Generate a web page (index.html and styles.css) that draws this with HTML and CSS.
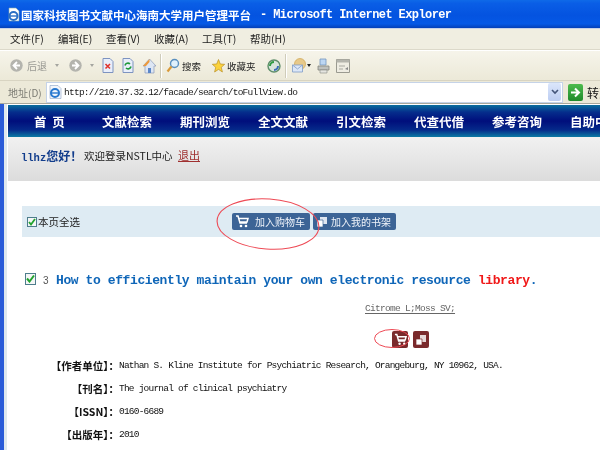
FILE: index.html
```html
<!DOCTYPE html>
<html lang="zh">
<head>
<meta charset="utf-8">
<title>国家科技图书文献中心海南大学用户管理平台</title>
<link rel="stylesheet" href="styles.css">
</head>
<body>
<div class="window">
  <header class="titlebar">
    <svg class="title-icon" width="13" height="15" viewBox="0 0 13 15"><path d="M2 1h7l3 3v10H2z" fill="#fff" stroke="#8aa" stroke-width=".6"/><circle cx="6.5" cy="9" r="4" fill="none" stroke="#2a6fc4" stroke-width="2"/><path d="M3 9h7" stroke="#2a6fc4" stroke-width="1.4"/></svg>
    <span class="title-cn">国家科技图书文献中心海南大学用户管理平台</span>
    <span class="title-en">- Microsoft Internet Explorer</span>
  </header>

  <nav class="menubar">
    <span>文件(F)</span><span>编辑(E)</span><span>查看(V)</span><span>收藏(A)</span><span>工具(T)</span><span>帮助(H)</span>
  </nav>

  <div class="toolbar">
    <svg class="t-back" width="13" height="13" viewBox="0 0 13 13"><circle cx="6.5" cy="6.5" r="6.2" fill="#b4b4ae"/><path d="M7 3 3.500 6.500 7 10M4 6.500h6" fill="none" stroke="#fff" stroke-width="1.800"/></svg>
    <span class="t-backtext">后退</span>
    <i class="caret grey t-caret1"></i>
    <svg class="t-fwd" width="13" height="13" viewBox="0 0 13 13"><circle cx="6.5" cy="6.5" r="6.2" fill="#b4b4ae"/><path d="M6 3l3.500 3.500L6 10M3 6.500h6" fill="none" stroke="#fff" stroke-width="1.800"/></svg>
    <i class="caret grey t-caret2"></i>
    <svg class="t-stop" width="12" height="15" viewBox="0 0 12 15"><path d="M1 .5h7l3 3v11H1z" fill="#e8eefa" stroke="#7d93c0"/><path d="M3.500 6l4.500 4.500M8 6l-4.500 4.500" stroke="#e0342c" stroke-width="1.600"/></svg>
    <svg class="t-refresh" width="12" height="15" viewBox="0 0 12 15"><path d="M1 .5h7l3 3v11H1z" fill="#e8eefa" stroke="#7d93c0"/><path d="M3 7.500a3 3 0 0 1 5-1.500M9 8.500a3 3 0 0 1-5 1.500" fill="none" stroke="#1e9a3c" stroke-width="1.600"/></svg>
    <svg class="t-home" width="15" height="16" viewBox="0 0 15 16"><path d="M7.500 1 1 8h2v7h9V8h2z" fill="#dde6f4" stroke="#8a9ab8" stroke-width=".7"/><path d="M7.500 1 1 8h3l3.500-4z" fill="#ee9a3a"/><path d="M6 10h3v5H6z" fill="#5a86c8"/></svg>
    <i class="sep t-sep1"></i>
    <svg class="t-search" width="14" height="15" viewBox="0 0 14 15"><circle cx="8.500" cy="5.500" r="4" fill="#dff0fb" stroke="#5a8fbe" stroke-width="1.400"/><path d="M5.500 8.500 1.500 13.500" stroke="#d99a3a" stroke-width="2.200"/></svg>
    <span class="t-label t-searchtext">搜索</span>
    <svg class="t-star" width="13" height="14" viewBox="0 0 13 14"><path d="M6.500.5 8.300 5l4.400.3-3.400 3 1.100 4.700-3.900-2.600L2.600 13l1.100-4.700-3.400-3L4.700 5z" fill="#fbd23c" stroke="#b98f2a" stroke-width=".7"/></svg>
    <span class="t-label t-favtext">收藏夹</span>
    <svg class="t-media" width="14" height="14" viewBox="0 0 14 14"><circle cx="7" cy="7" r="6" fill="#d7e4dc" stroke="#5f8e6a" stroke-width="1.400"/><path d="M3 7a4 4 0 0 1 4-4" fill="none" stroke="#2f9b43" stroke-width="2"/><path d="M7 11a4 4 0 0 0 4-4" fill="none" stroke="#3a6fb8" stroke-width="2"/></svg>
    <i class="sep t-sep2"></i>
    <svg class="t-mail" width="14" height="15" viewBox="0 0 14 15"><circle cx="8" cy="6" r="5.500" fill="#e7c98a" stroke="#d0a650" stroke-width=".7"/><path d="M.5 7h10v7H.5z" fill="#dce7f7" stroke="#7f9cc8" stroke-width=".8"/><path d="m.5 7 5 4 5-4" fill="none" stroke="#7f9cc8" stroke-width=".8"/></svg>
    <i class="caret t-caret3"></i>
    <svg class="t-print" width="13" height="16" viewBox="0 0 13 16"><path d="M3 1h6v6H3z" fill="#bcd6f2" stroke="#7597bf" stroke-width=".8"/><path d="M1 8h11v4H1z" fill="#bfc1bd" stroke="#85877f" stroke-width=".8"/><path d="M3 12h7v3H3z" fill="#e5e5e0" stroke="#85877f" stroke-width=".6"/></svg>
    <svg class="t-edit" width="14" height="14" viewBox="0 0 14 14"><path d="M.5.500h13v13H.5z" fill="#eeece2" stroke="#9a9a90"/><path d="M.5.500h13v3H.5z" fill="#b4b4ac"/><path d="M3 7h6M3 10h4" stroke="#a8a8a0"/><path d="m9 10 3-2v3z" fill="#888"/></svg>
  </div>

  <div class="addressbar">
    <span class="addr-label">地址(D)</span>
    <div class="addr-input">
      <svg width="13" height="14" viewBox="0 0 13 14"><path d="M1 .5h8l3 3V13.500H1z" fill="#f2f6fc" stroke="#8aa2c6" stroke-width=".6"/><circle cx="6" cy="8" r="4" fill="none" stroke="#2778cf" stroke-width="2"/><path d="M3 8h6" stroke="#2778cf" stroke-width="1.400"/></svg>
      <span class="addr-url">http://210.37.32.12/facade/search/toFullView.do</span>
      <span class="addr-drop"><svg width="8" height="6" viewBox="0 0 8 6"><path d="m1 1 3 3 3-3" fill="none" stroke="#44557a" stroke-width="1.600"/></svg></span>
    </div>
    <span class="go-btn"><svg width="11" height="11" viewBox="0 0 11 11"><path d="M1 5.500h7M5 1.500l4 4-4 4" fill="none" stroke="#fff" stroke-width="2"/></svg></span>
    <span class="go-text">转到</span>
  </div>

  <main class="page">
    <nav class="sitenav">
      <span class="nav-home">首&nbsp;&nbsp;页</span><span>文献检索</span><span>期刊浏览</span><span>全文文献</span><span>引文检索</span><span>代查代借</span><span>参考咨询</span><span>自助中心</span>
    </nav>
    <div class="greeting">
      <b class="g-user"><span class="g-latin">llhz</span>您好！</b><span class="g-text">欢迎登录NSTL中心</span><a class="g-exit">退出</a>
    </div>

    <div class="selectbar">
      <span class="check small"><svg width="8" height="8" viewBox="0 0 8 8"><path d="m1 4 2 2.500L7 1" fill="none" stroke="#21a32e" stroke-width="1.800"/></svg></span>
      <span class="select-label">本页全选</span>
      <span class="actions">
        <span class="btn btn-cart">
          <svg width="14" height="13" viewBox="0 0 14 13"><path d="M1 1h2l2 7h7M4 3.500h9L12 7H5" fill="none" stroke="#fff" stroke-width="1.500"/><circle cx="6" cy="11" r="1.300" fill="#fff"/><circle cx="11" cy="11" r="1.300" fill="#fff"/></svg>
          <span>加入购物车</span>
        </span>
        <span class="btn btn-shelf">
          <svg width="12" height="12" viewBox="0 0 12 12"><path d="M4 1h7v7H4z" fill="#dfe6f0"/><path d="M1 4h6v7H1z" fill="#fff" stroke="#3c6496" stroke-width=".7"/></svg>
          <span>加入我的书架</span>
        </span>
      </span>
    </div>

    <div class="record-title">
      <span class="check"><svg width="9" height="9" viewBox="0 0 9 9"><path d="m1 4.500 2.500 3L8 1.500" fill="none" stroke="#21a32e" stroke-width="2"/></svg></span>
      <span class="record-no">3</span>
      <span class="record-link">How to efficiently maintain your own electronic resource <em>library</em>.</span>
    </div>

    <div class="authors"><a>Citrome L;Moss SV;</a></div>

    <div class="record-icons">
      <span class="mini mini-cart"><svg width="13" height="13" viewBox="0 0 14 13"><path d="M1 1h2l2 7h7M4 3.500h9L12 7H5" fill="none" stroke="#fff" stroke-width="1.600"/><circle cx="6" cy="11" r="1.300" fill="#fff"/><circle cx="11" cy="11" r="1.300" fill="#fff"/></svg></span>
      <span class="mini mini-shelf"><svg width="12" height="12" viewBox="0 0 12 12"><path d="M5 1h6v7H5z" fill="#e6d8d8"/><path d="M1 5h6v6H1z" fill="#fff" stroke="#7a2a2c" stroke-width=".7"/></svg></span>
    </div>

    <dl class="details">
      <dt>【作者单位】：</dt><dd>Nathan S. Kline Institute for Psychiatric Research, Orangeburg, NY 10962, USA.</dd>
      <dt>【刊名】：</dt><dd>The journal of clinical psychiatry</dd>
      <dt>【ISSN】：</dt><dd>0160-6689</dd>
      <dt>【出版年】：</dt><dd>2010</dd>
    </dl>

    <svg class="oval oval-big" width="106" height="54" viewBox="0 0 106 54"><ellipse cx="53" cy="27" rx="51" ry="25" fill="none" stroke="#ee4a55" stroke-width="1.100" transform="rotate(4 53 27)"/></svg>
    <svg class="oval oval-small" width="38" height="21" viewBox="0 0 38 21"><ellipse cx="19" cy="10.500" rx="17.500" ry="9" fill="none" stroke="#ee4a55" stroke-width="1"/></svg>
  </main>
</div>
</body>
</html>
```
FILE: styles.css
```css
* { box-sizing: border-box; }
html, body { margin: 0; padding: 0; }
body {
  width: 600px;
  height: 450px;
  overflow: hidden;
  background: #fff;
  font-family: "Noto Sans CJK SC", "Liberation Sans", sans-serif;
}
.window {
  width: 600px;
  height: 450px;
  display: flex;
  flex-direction: column;
  overflow: hidden;
  filter: blur(0.35px);
}

/* title bar */
.titlebar {
  flex: 0 0 28px;
  display: flex;
  align-items: center;
  padding: 1px 0 0 7px;
  color: #fff;
  background: linear-gradient(#0f6ae8 0, #0a5ee6 12%, #0453e0 55%, #0559e6 85%, #0340b8 100%);
}
.title-cn {
  margin-left: 1px;
  font-size: 11.500px;
  font-weight: 700;
  line-height: 14px;
  white-space: nowrap;
}
.title-en {
  margin-left: 9px;
  font-family: "Liberation Mono", monospace;
  font-size: 12px;
  letter-spacing: -.6px;
  font-weight: 700;
  white-space: pre;
}

/* menu bar */
.menubar {
  flex: 0 0 22px;
  display: flex;
  align-items: center;
  padding: 0 0 2px 10px;
  gap: 14px;
  background: #f0eee1;
  border-top: 1px solid #c9d2e6;
  border-bottom: 1px solid #dcd9ca;
  color: #1c1c1c;
  font-size: 10.500px;
}
.menubar span { width: 34px; white-space: nowrap; }

/* toolbar */
.toolbar {
  flex: 0 0 31px;
  display: flex;
  align-items: center;
  padding-left: 10px;
  background: linear-gradient(#f6f4ea, #ece9d8);
  border-top: 1px solid #fff;
  border-bottom: 1px solid #d8d4c2;
  font-size: 10px;
  color: #222;
}
.toolbar svg { flex: none; }
.t-label { white-space: nowrap; font-size: 9.500px; width: 20px; }
.t-backtext { margin-left: 4px; width: 20px; color: #9a9a94; font-size: 10px; }
.caret { width: 0; height: 0; border: 2.500px solid transparent; border-top: 3px solid #222; border-bottom: 0; flex: none; }
.caret.grey { border-top-color: #a5a5a0; }
.t-caret1 { margin-left: 8px; }
.t-fwd { margin-left: 10px; }
.t-caret2 { margin-left: 8px; }
.t-stop { margin-left: 8px; }
.t-refresh { margin-left: 8px; }
.t-home { margin-left: 8px; }
.sep { flex: none; width: 1px; height: 24px; background: #cfccba; box-shadow: 1px 0 0 #fff; }
.t-sep1 { margin-left: 3px; }
.t-search { margin-left: 5px; }
.t-searchtext { margin-left: 2px; }
.t-star { margin-left: 10px; }
.t-favtext { margin-left: 2px; width: 30px; }
.t-media { margin-left: 10px; }
.t-sep2 { margin-left: 4px; }
.t-mail { margin-left: 6px; }
.t-caret3 { margin-left: 1px; }
.t-print { margin-left: 6px; }
.t-edit { margin-left: 6px; }

/* address bar */
.addressbar {
  flex: 0 0 23px;
  display: flex;
  align-items: center;
  padding-left: 8px;
  background: #ece9d8;
  border-bottom: 1px solid #a9a89c;
}
.addr-label { flex: none; width: 38px; font-size: 10px; color: #7a7a72; white-space: nowrap; }
.addr-input {
  flex: none;
  width: 517px;
  height: 21px;
  display: flex;
  align-items: center;
  padding: 0 1px 0 2px;
  background: #fff;
  border: 1px solid #c5d3e8;
}
.addr-url {
  margin-left: 2px;
  font-family: "Liberation Mono", monospace;
  font-size: 9.500px;
  letter-spacing: -.74px;
  color: #1a1a1a;
  flex: 1;
  white-space: nowrap;
}
.addr-drop {
  width: 13px;
  height: 18px;
  display: flex;
  align-items: center;
  justify-content: center;
  border-radius: 2px;
  background: linear-gradient(#dbe6fb, #bccdf2);
}
.go-btn {
  flex: none;
  margin-left: 5px;
  width: 15px;
  height: 17px;
  display: flex;
  align-items: center;
  justify-content: center;
  border-radius: 2px;
  background: linear-gradient(#4dbb4d, #1f8a2a);
}
.go-text { flex: none; margin-left: 4px; font-size: 12px; color: #111; white-space: nowrap; }

/* page */
.page {
  flex: 1;
  position: relative;
  overflow: hidden;
  background: #fff;
  border-left: 4px solid #2a5bd8;
  box-shadow: inset 3px 0 0 #dfe8ee;
  padding-top: 1px;
  color: #111;
}
.sitenav {
  margin-left: 4px;
  height: 32px;
  display: flex;
  align-items: center;
  padding-left: 26px;
  gap: 28px;
  color: #fff;
  font-size: 12.500px;
  font-weight: 700;
  white-space: nowrap;
  background: linear-gradient(#0a6f9e 0, #052e8c 22%, #000e7c 50%, #052a8a 78%, #0a7aa4 100%);
}
.sitenav span { flex: none; }
.nav-home { width: 40px; }
.greeting {
  margin-left: 4px;
  height: 44px;
  display: flex;
  align-items: center;
  padding: 0 0 8px 13px;
  font-size: 11px;
  background: linear-gradient(#f1f1f1, #dcdcdc);
  white-space: nowrap;
}
.g-user { color: #123d8c; font-size: 12px; width: 63px; }
.g-latin { font-family: "Liberation Mono", monospace; font-size: 10.500px; }
.g-text { color: #222; font-size: 10.500px; width: 94px; }
.g-exit { color: #a03030; font-size: 11px; text-decoration: underline; }

.selectbar {
  margin: 25px 0 0 18px;
  height: 31px;
  display: flex;
  align-items: center;
  background: #deebf3;
  padding-left: 5px;
}
.check {
  flex: none;
  width: 11px;
  height: 12px;
  display: flex;
  align-items: center;
  justify-content: center;
  background: #f4f6f6;
  border: 1px solid #4d7d8c;
}
.check.small { width: 10px; height: 10px; }
.select-label { margin-left: 1px; font-size: 10.500px; color: #222; width: 42px; white-space: nowrap; }
.actions { margin-left: 152px; display: flex; gap: 3px; }
.btn {
  display: flex;
  align-items: center;
  height: 17px;
  padding-left: 3px;
  border-radius: 2px;
  background: #3c6496;
  color: #f0f4fa;
  font-size: 10px;
  white-space: nowrap;
}
.btn-cart { width: 78px; gap: 6px; }
.btn-shelf { width: 83px; gap: 3px; }

.record-title {
  margin: 36px 0 0 21px;
  height: 14px;
  display: flex;
  align-items: center;
}
.record-title .check { margin-bottom: 3px; }
.record-no {
  margin-left: 7px;
  width: 13px;
  font-size: 10px;
  color: #555;
  font-family: "Liberation Sans", sans-serif;
}
.record-link {
  font-family: "Liberation Mono", monospace;
  font-size: 13px;
  font-weight: 700;
  letter-spacing: -.4px;
  color: #0f66b8;
  white-space: nowrap;
}
.record-link em { color: #f01818; font-style: normal; }

.authors {
  margin: 16px 0 0 361px;
  font-family: "Liberation Mono", monospace;
  font-size: 9.500px;
  letter-spacing: -.7px;
  line-height: 12px;
  color: #666;
  white-space: nowrap;
}
.authors a { text-decoration: underline; text-underline-offset: 2px; }

.record-icons {
  margin: 16px 0 0 388px;
  display: flex;
  gap: 5px;
}
.mini {
  width: 16px;
  height: 17px;
  display: flex;
  align-items: center;
  justify-content: center;
  background: #7a2a2c;
  border-radius: 2px;
}
.details {
  margin: 6px 0 0;
  display: grid;
  grid-template-columns: 115px 1fr;
  grid-auto-rows: 23px;
  align-items: center;
  color: #111;
}
.details dt { text-align: right; font-weight: 700; font-size: 10.500px; white-space: nowrap; }
.details dd {
  margin: 0;
  font-family: "Liberation Mono", monospace;
  font-size: 9.500px;
  letter-spacing: -.78px;
  white-space: nowrap;
}

.oval { position: absolute; }
.oval-big { left: 211px; top: 93px; }
.oval-small { left: 369px; top: 224px; }
```
